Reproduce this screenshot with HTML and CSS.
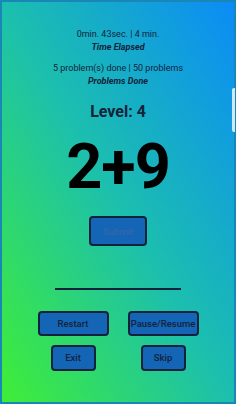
FILE: index.html
```html
<!DOCTYPE html>
<html>
<head>
<meta charset="utf-8">
<link rel="stylesheet" href="styles.css">
</head>
<body>
<div class="screen">
  <div class="stat">
    <div class="value">0min. 43sec. | 4 min.</div>
    <div class="label">Time Elapsed</div>
  </div>
  <div class="stat stat2">
    <div class="value">5 problem(s) done | 50 problems</div>
    <div class="label">Problems Done</div>
  </div>
  <div class="level">Level: 4</div>
  <div class="problem">2+9</div>
  <button class="btn submit">Submit</button>
  <div class="answer-line"></div>
  <div class="controls">
    <button class="btn wide">Restart</button>
    <button class="btn wide">Pause/Resume</button>
    <button class="btn small">Exit</button>
    <button class="btn small">Skip</button>
  </div>
  <div class="scroll-hint"></div>
</div>
</body>
</html>
```
FILE: styles.css
```css
* { box-sizing: border-box; }
html, body { margin: 0; padding: 0; }
body {
  width: 236px;
  height: 404px;
  overflow: hidden;
  font-family: Roboto, "Liberation Sans", sans-serif;
}
.screen {
  position: relative;
  width: 236px;
  height: 404px;
  border: 2px solid #1a86b8;
  background: linear-gradient(to bottom left, #0b8cf6 0%, #1cbfae 50%, #3fee36 100%);
  display: flex;
  flex-direction: column;
  align-items: center;
  color: #14223a;
}
.stat { text-align: center; margin-top: 26px; }
.stat2 { margin-top: 8px; }
.value { font-size: 9px; line-height: 13px; }
.label { font-size: 9px; line-height: 13px; font-weight: bold; font-style: italic; }
.level {
  margin-top: 14px;
  font-size: 16px;
  font-weight: bold;
  line-height: 20px;
}
.problem {
  margin-top: 14px;
  font-size: 63px;
  font-weight: bold;
  line-height: 62px;
  color: #000;
  letter-spacing: -1px;
}
.btn {
  font-family: Roboto, "Liberation Sans", sans-serif;
  background: #1565b6;
  border: 2px solid #10233a;
  border-radius: 4px;
  color: #14223a;
  font-size: 9.5px;
  font-weight: 500;
  padding: 0;
}
.submit {
  margin-top: 18px;
  width: 58px;
  height: 30px;
  color: #3a68a6;
  font-weight: 400;
}
.answer-line {
  margin-top: 42px;
  width: 126px;
  height: 1.5px;
  background: #14223a;
}
.controls {
  margin-top: 21px;
  display: grid;
  grid-template-columns: 71px 71px;
  column-gap: 19px;
  row-gap: 9px;
  justify-items: center;
}
.wide { width: 71px; height: 25px; }
.small { width: 45px; height: 26px; }
.scroll-hint {
  position: absolute;
  right: -1px;
  top: 86px;
  width: 3px;
  height: 44px;
  background: #cfe9f7;
  border-radius: 2px 0 0 2px;
}
```
